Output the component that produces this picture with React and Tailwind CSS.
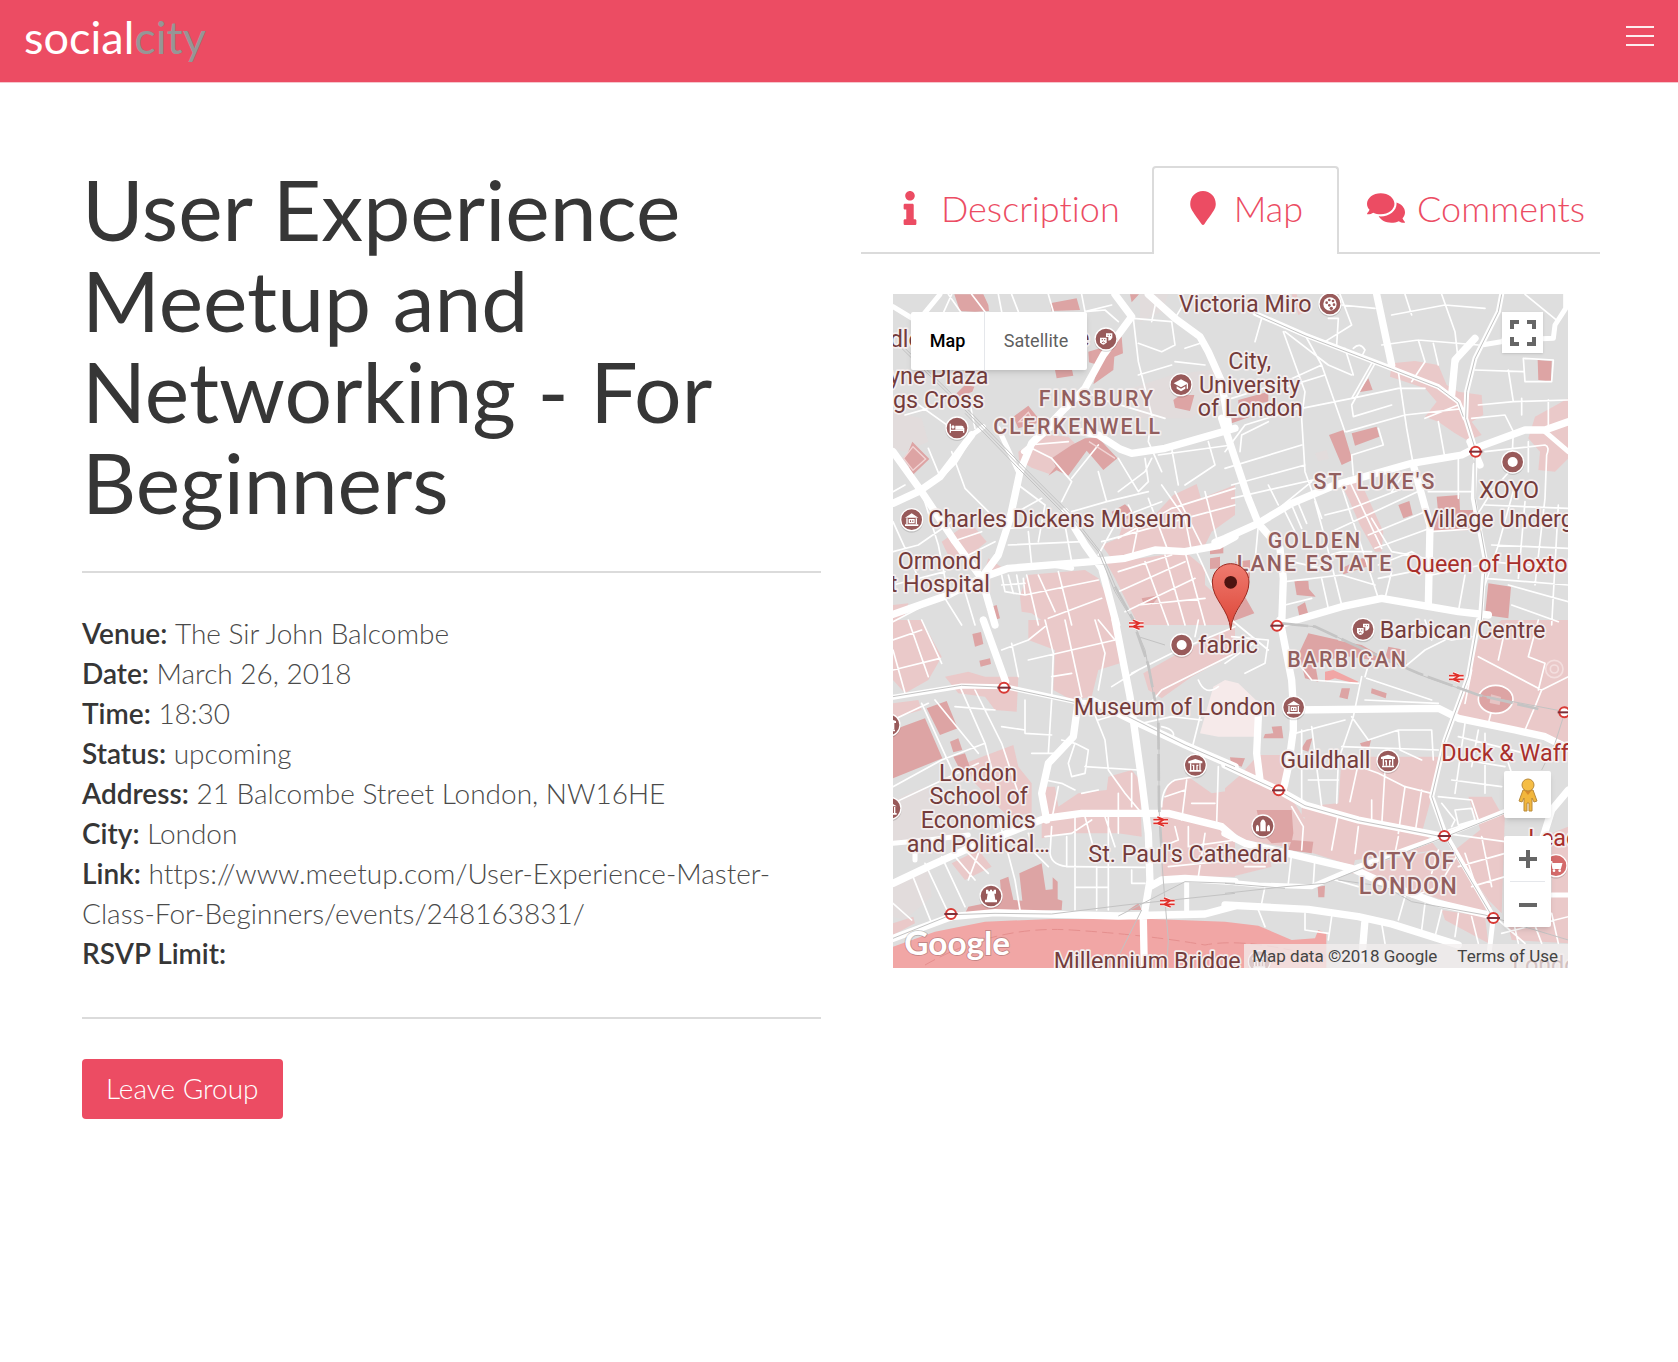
import React, { useState } from "react";
import { FaInfo, FaMapMarker, FaComments } from "react-icons/fa";

const details = [
  ["Venue", "The Sir John Balcombe"],
  ["Date", "March 26, 2018"],
  ["Time", "18:30"],
  ["Status", "upcoming"],
  ["Address", "21 Balcombe Street London, NW16HE"],
  ["City", "London"],
  ["Link", "https://www.meetup.com/User-Experience-Master-Class-For-Beginners/events/248163831/"],
  ["RSVP Limit", ""],
];

const tabs = [
  { id: "description", label: "Description", Icon: FaInfo },
  { id: "map", label: "Map", Icon: FaMapMarker },
  { id: "comments", label: "Comments", Icon: FaComments },
];

/* The street map is drawn from four tiles; each holds its own coordinates. */
const tiles = [
  {
    id: "nw",
    shift: "translate(0 0)",
    faint:
      "M24 380 L110 400 L130 470 L60 500 L24 490Z M765 28 L850 28 L830 80 L765 110Z M740 310 L860 270 L1010 250 L1020 330 L920 400 L760 400Z",
    pale:
      "M400 500 L430 480 L490 450 L550 455 L570 475 L500 520 L512 550 L495 568 L440 548 L402 525Z M170 770 L255 710 L305 770 L250 815 L200 832Z M310 820 L370 860 L290 885Z M405 935 L425 870 L600 855 L640 880 L665 935 L700 1020 L490 1020 L440 985 L410 980Z M650 780 L700 760 L720 700 L800 700 L865 630 L935 597 L948 640 L1050 600 L1050 690 L980 740 L960 780 L680 822Z M665 835 L900 800 L960 850 L960 900 L1050 980 L1050 1020 L760 1020 L690 880Z M24 960 L70 955 L60 990 L24 1015Z",
    dark:
      "M208 28 L295 28 L310 60 L312 78 L270 80 L225 78Z M495 55 L575 40 L585 75 L500 78Z M510 255 L560 250 L565 272 L515 280Z M215 325 L240 300 L268 305 L262 320 L225 335Z M670 155 L710 155 L714 205 L688 215 L685 255 L625 298 L640 240 L612 232 L610 200 L660 185Z M865 345 L885 330 L928 330 L915 378 L870 368Z M82 470 L133 522 L80 573 L72 545 L55 520 L68 505Z M385 395 L430 362 L460 400 L455 415 L400 430Z M680 680 L720 658 L745 680 L740 700 L690 705Z M735 28 L762 28 L740 52Z M975 795 L1015 785 L1015 805 L975 808Z M975 820 L1005 815 L1005 850 L975 852Z M305 970 L335 960 L345 1000 L318 1008Z M770 940 L825 930 L800 960 L775 955Z M500 520 L560 480 L600 460 L640 458 L697 520 L655 555 L625 520 L605 497 L550 572 L515 556 L490 572 L512 545Z",
    thin:
      "M190 28 L230 85 M260 28 L300 80 M340 28 L350 80 M380 28 L400 80 M490 28 L505 80 M590 28 L600 80 L660 75 L700 110 M600 80 L680 60 M745 100 L760 230 L800 390 L790 470 L830 560 M745 100 L860 110 L870 180 L830 200 L760 175 M815 40 L800 110 M870 100 L900 50 M900 190 L960 170 M60 390 L130 370 M130 490 L165 575 M200 500 L240 610 L330 700 M24 620 L60 600 M110 620 L160 780 L190 930 M24 710 L110 900 M24 800 L100 780 L230 690 M200 770 L290 740 M210 830 L330 770 M350 870 L360 920 L420 930 L415 880 M370 870 L385 925 M395 870 L405 925 M350 900 L420 895 M425 870 L460 1020 M460 870 L510 980 M520 860 L560 1020 M420 930 L640 885 M490 1000 L650 940 M440 490 L500 520 L560 590 L530 650 M560 580 L640 480 M640 560 L665 650 L560 680 M665 650 L790 620 M700 520 L760 620 L790 590 L780 520 M700 620 L780 560 L800 520 M430 480 L550 470 M380 690 L470 640 M400 600 L480 660 L460 770 M370 730 L540 720 M540 720 L560 830 M430 740 L440 840 M370 780 L590 770 M640 810 L700 700 L830 650 M700 760 L860 670 L1050 610 M650 770 L900 700 L1050 660 M730 660 L760 720 L740 820 M790 640 L850 800 M830 600 L900 700 L920 800 M870 620 L950 780 M960 620 L1000 780 M700 860 L860 810 M700 920 L900 830 M720 980 L930 880 M780 830 L850 1020 M840 810 L900 1020 M900 800 L960 1020 M930 790 L980 900 L1050 960 M760 960 L960 940 M24 900 L180 860 M180 940 L230 1020 M240 920 L270 1020 M24 1010 L120 960 M590 310 L640 340 L840 400 M860 240 L760 270 M870 230 L960 240 M970 470 L990 540 L900 600 M860 490 L880 600 M820 510 L1040 480 M60 330 L200 430 M200 28 L100 250 M270 430 L250 330",
    medium:
      "M24 65 L90 105 M165 28 L110 95 M165 575 L210 530 L260 450 L295 425 M415 500 L440 480 L530 400 M340 430 L400 560 M560 850 L500 840",
    wide:
      "M690 28 L740 95 L655 210 L600 310 L540 370 L440 475 L405 560 L375 700 L340 810 L290 878 L190 930 L24 988 M790 28 L870 100 L945 155 L970 200 L1010 290 L1030 420 M590 440 L640 450 L705 492 L740 505 L840 490 L1050 430 M24 500 L110 620 L210 770 L290 880 L330 1020 M24 655 L100 620 L165 575 L260 450 M540 680 L600 780 L650 850 L695 1020 M290 878 L370 850 L620 830 L720 820 L810 795 L900 800 L1000 782 L1050 755",
    rail: "M50 190 L250 385 L410 550 L550 690 L640 800 L690 920 L745 1010 M60 190 L260 385 L420 550 L560 690 L650 805 L700 925 M240 385 L400 550 L540 690",
  },
  {
    id: "ne",
    shift: "translate(1020 0)",
    faint: "M270 505 L305 495 L312 522 L280 528Z",
    pale:
      "M500 235 L570 228 L640 240 L665 300 L700 320 L770 330 L775 390 L740 410 L770 450 L745 460 L725 465 L690 445 L640 410 L600 395 L635 350 L600 310 L495 275Z M345 590 L400 575 L475 740 L470 800 L450 800 L405 720 L370 640Z M930 395 L1030 340 L1030 520 L990 560 L940 555 L945 500 L910 460Z M200 28 L220 90 L235 85 L215 28Z",
    dark:
      "M312 450 L355 435 L382 525 L350 540Z M380 445 L455 425 L463 455 L390 482Z M400 322 L430 280 L443 315Z M938 225 L980 228 L978 290 L940 285Z M635 635 L703 630 L705 675 L745 675 L740 735 L625 738 L640 690Z M520 660 L553 648 L563 690 L535 700Z M790 895 L858 905 L850 1000 L780 990Z M208 888 L250 888 L252 912 L272 935 L215 930Z M217 965 L240 952 L252 995 L225 1002Z M20 1010 L60 935 L88 985Z M350 850 L420 815 L425 845 L355 868Z M40 345 L130 320 L130 350 L40 365Z M20 400 L75 395 L20 415Z M30 830 L75 825 L75 880 L50 885Z",
    thin:
      "M110 100 L90 170 M345 28 L380 120 L300 170 M310 100 L340 100 L335 180 M175 140 L240 320 L230 400 L240 560 L290 700 M180 140 L310 240 L380 270 M240 150 L290 240 L360 440 M290 240 L180 290 L20 340 M300 270 L170 310 M360 190 L385 270 M385 190 Q405 170 420 195 L410 215 M350 60 L450 70 M440 235 L380 340 L230 370 M450 235 L380 360 L385 395 L500 360 M380 340 L520 310 L600 310 M500 90 L660 60 M540 28 L560 90 M470 180 L580 165 L760 180 M580 165 L600 230 L560 290 M625 175 L640 240 M650 28 L690 140 L700 230 M660 60 L780 70 M520 260 L545 430 L565 540 M460 430 L475 480 L380 510 L385 570 M365 440 L540 390 L720 370 M600 400 L700 360 M640 410 L660 520 M750 255 L895 260 M850 255 L865 350 L760 360 M895 220 L985 225 L980 290 L900 290Z M865 350 L1030 345 M890 340 L890 390 M970 345 L970 430 M900 28 L1000 110 M840 130 L830 170 M740 400 L840 390 L865 440 L862 500 M780 500 L960 480 Q975 485 965 510 L960 640 M910 470 L910 560 M870 540 L800 620 L750 700 M870 600 L820 780 L780 900 M780 660 L1030 670 M800 780 L1030 790 M790 830 L1030 850 M780 880 L1030 900 M900 650 L880 880 M960 640 L930 900 M1000 660 L980 1020 M850 900 L1030 950 M860 960 L1000 1010 M0 500 L60 420 L220 370 M45 500 L50 450 L130 410 M0 550 L230 480 M20 600 L240 540 M20 640 L330 570 M130 600 L160 660 M100 720 L260 590 M270 650 L300 760 L350 960 M180 680 L210 740 M200 660 L230 730 M220 655 L245 715 M345 590 L460 940 M370 580 L470 790 M300 690 L380 670 L560 600 M320 740 L600 610 M430 750 L600 680 M450 790 L615 730 M440 700 L500 800 L610 820 M460 840 L560 800 L610 830 M460 880 L610 850 M480 940 L500 860 M280 820 L350 800 L440 800 M200 830 L290 850 M180 890 L350 870 L450 900 M290 880 L310 970 M180 960 L260 940 M100 720 L90 830 M700 520 L700 640 M610 620 L740 620 M615 740 L770 730 M620 870 L770 840 M500 620 L540 560 M700 980 L720 870",
    medium:
      "M90 85 L240 150 L500 250 L640 305 L700 350 L720 400 M770 180 L860 165 L985 160 L990 120 L1022 70 L1022 28 M750 540 L745 640 L780 820 L765 1020 M830 28 L820 80 L750 220 L725 320 L722 400 L750 490 M960 440 L1030 500",
    wide:
      "M455 28 L500 240 M750 160 L690 225 L680 330 M-30 772 L0 760 L100 715 L200 655 L330 600 L560 535 L710 510 L750 490 L900 435 L960 435 L1030 410 M-10 400 L70 640 L100 715 L165 790 L175 880 L170 1020 M565 540 L615 720 L610 960 M170 1018 L350 965 L470 940 L700 980 L790 990 M735 470 L765 540",
    rail: "M90 85 L240 152 L500 252 L640 307 L700 352 L715 395 M830 28 L820 80 L750 220 L725 320 L722 400 L750 490 L750 640 L782 820 L768 1020",
  },
  {
    id: "sw",
    shift: "translate(0 1005)",
    faint:
      "M24 540 L120 500 L250 560 L250 660 L24 670Z M24 800 L130 740 L140 830 L60 900 L24 890Z M880 110 L1000 60 L1010 130 L900 165Z",
    pale:
      "M24 0 L110 0 L170 110 L130 180 L60 220 L24 180Z M180 170 L250 155 L300 170 L400 170 L395 275 L330 270 L300 230 L220 220Z M430 0 L690 0 L705 130 L640 150 L620 230 L560 240 L505 210 L510 90 L430 60Z M24 250 L100 240 L110 270 L24 295Z M775 160 L880 100 L1050 20 L1050 100 L920 170 L830 235 L790 210Z M240 430 L385 375 L400 440 L440 490 L440 580 L370 590 L310 530 L270 490Z M470 655 L470 500 L510 500 L520 560 L580 520 L665 510 L670 470 L740 450 L765 480 L770 650 L700 640 L560 640Z M830 560 L850 490 L910 470 L980 520 L1050 510 L1050 770 L830 770 L830 620Z M200 730 L280 690 L320 740 L240 780Z M24 910 L85 890 L90 910 L24 945Z",
    dark:
      "M24 330 L120 295 L172 415 L24 475Z M125 265 L185 243 L218 325 L165 345Z M195 365 L220 355 L232 390 L205 397Z M205 410 L240 400 L258 450 L225 450Z M262 42 L288 36 L295 72 L270 80Z M283 122 L315 115 L318 132 L287 140Z M403 760 L470 730 L482 810 L503 808 L503 772 L518 785 L518 838 L532 842 L530 870 L240 880 L250 860 L350 840 L345 780 L370 770 L385 840 L412 842Z M730 870 L760 850 L770 870Z",
    thin:
      "M24 60 L110 30 M70 0 L130 170 M24 150 L165 115 M24 90 L60 220 M110 0 L170 130 M225 200 L300 370 L340 520 M110 250 L210 470 M150 240 L280 400 M210 260 L330 270 M24 300 L130 250 M24 500 L170 420 L300 370 M24 550 L280 430 M270 210 L350 370 L400 520 M350 90 L430 60 L480 20 M380 70 L400 170 M480 0 L505 100 L500 230 M540 0 L590 230 M630 0 L660 100 L640 210 M430 120 L690 60 M500 170 L560 160 M420 240 L420 340 L500 345 M350 320 L420 330 M440 400 L520 400 M500 240 L490 400 M570 370 L610 390 L600 460 L560 470 L550 430Z M620 260 L660 360 L670 450 L720 520 L770 580 M600 440 L760 450 M530 360 L570 370 M640 300 L740 270 M680 200 L760 150 M740 160 L880 90 L1050 20 M770 280 L830 210 L930 160 L1050 100 M940 180 Q960 230 1000 200 M950 270 L920 390 M770 310 L860 290 L950 300 M830 320 Q880 330 860 360 M480 480 L530 490 L570 510 M520 500 L500 600 M590 520 L640 510 M700 520 L700 640 M740 460 L740 560 M500 620 L495 700 Q500 740 560 740 L780 742 M570 590 L570 870 M635 740 L635 870 M670 590 L670 870 M600 590 L630 700 M570 802 L670 802 M660 590 L690 680 M740 750 L740 790 L780 790 M545 650 L545 740 M480 650 L560 640 L620 600 M830 560 Q830 500 870 480 L930 470 M905 480 L890 600 M840 530 L900 510 M1000 440 L995 610 M920 550 L990 550 M870 620 L880 660 L830 680 M910 620 L910 680 L1050 660 M850 740 L1050 720 M960 640 L940 770 M120 730 L200 900 M170 710 L240 860 M80 760 L140 910 M210 710 L270 780 M240 690 L310 760 M24 850 L80 900 M340 590 L390 780 L405 870 M280 700 L250 780 M430 640 L450 700 L490 740 M640 0 L690 60 M940 0 L930 50",
    medium:
      "M24 232 L230 198 L360 200 L570 245 L640 250 M24 670 L130 660 L250 645 M905 780 L905 880 M90 680 L90 720",
    wide:
      "M295 0 L362 185 M690 0 L735 230 L770 480 L790 640 L795 790 M580 240 L565 350 L490 430 L470 520 L485 600 M24 790 L130 740 L240 690 L480 595 L590 580 L850 580 L1010 620 L1050 655 M24 955 L200 890 L330 878 L550 884 L700 888 L960 882 L1050 858 M795 780 L775 900 L778 1050 M795 800 L830 780 L900 775 L1050 785 M620 240 L740 300 L900 375 L1050 440",
    rail: "M24 230 L230 196 L360 202 L570 247 M700 275 L900 375 L1050 440 M755 30 L780 90 L818 290 L822 380 L822 560 L828 690 L838 820 L850 960 L845 1040 M760 50 L840 75 M24 955 L200 884 L330 880 L500 882 L720 855 L1050 820 M700 888 L900 785 L1050 790 M770 870 L705 1000",
  },
  {
    id: "se",
    shift: "translate(1020 1005)",
    faint: "",
    pale:
      "M40 470 L100 405 L180 405 L190 520 L240 600 L235 690 L60 660 L0 620 L0 505Z M350 410 L640 410 L620 530 L590 640 L230 590 L230 560 L340 550Z M760 60 L830 0 L1030 0 L1030 370 L860 330 L690 290 L740 140Z M240 560 L600 640 L640 690 L390 740 L235 690Z M380 760 L460 770 L760 880 L800 860 L700 700 L640 690 L390 720Z M690 690 L840 570 L830 880 L790 840Z M840 880 L1030 820 L1030 970 L860 960Z M20 710 L130 700 L140 740 L20 770Z M650 870 L780 890 L790 970 L660 900Z M730 530 L800 530 L840 600 L770 640Z M980 640 L1030 620 L1030 880 L980 880Z",
    dark:
      "M250 40 L340 60 L330 115 L270 130 L280 185 L240 175 L222 100Z M330 60 L410 75 L480 115 L490 80 L540 90 L545 135 L340 105Z M350 205 L375 205 L368 238 L343 232Z M440 205 L485 220 L482 235 L438 220Z M95 570 L200 570 L205 640 L200 665 L140 670 L110 640Z M200 660 L265 665 L260 700 L190 690Z M140 320 L170 318 L175 355 L115 355 L120 342 L145 340Z M245 360 L262 355 L250 395 L228 388Z M405 370 L438 360 L432 385 L410 380Z M15 412 L60 415 L50 440 L18 430Z M278 800 L300 797 L298 832 L280 832Z",
    thin:
      "M20 0 L130 90 M20 50 L130 60 L120 130 L60 160 M0 130 L100 60 M220 130 L260 180 L400 190 M410 170 L385 290 L340 420 L335 550 M425 175 L620 240 M420 240 L640 250 M420 170 L440 100 M540 140 L600 90 L660 60 M560 30 L680 60 L740 50 M600 0 L620 60 M760 110 L950 210 L930 260 M950 210 L1030 170 M840 30 L820 120 M940 0 L910 110 L960 130 L940 210 M740 150 L720 250 M800 270 L790 310 M930 260 L900 330 M230 330 L230 560 M260 320 L290 560 M210 340 L360 300 M250 480 L340 480 M350 380 L640 390 M380 290 L430 360 L520 330 L620 330 L625 420 M520 330 L525 390 L590 420 M400 430 L375 545 M350 420 L460 460 L540 500 L620 520 M480 450 L470 620 M540 500 L520 640 M440 540 L440 610 M590 510 L570 640 M340 580 L320 690 M200 560 L235 620 L230 690 M400 620 L390 700 M520 650 L510 700 M640 530 L740 540 L760 600 L670 630 M650 550 L690 600 L680 620 M690 570 L740 565 L750 600 L700 615Z M660 410 L840 440 M720 310 L690 520 M760 330 L740 440 M700 350 L900 400 M680 480 L830 500 M780 340 L780 520 M860 460 L840 400 M660 640 L840 665 M700 740 L840 700 M740 800 L840 770 M720 700 L760 820 M770 650 L800 800 M700 700 L640 800 L560 830 M640 690 L620 760 M270 710 L265 790 M200 700 L190 790 M60 740 L120 740 M120 800 L110 850 M330 780 L400 800 M540 830 L520 900 M600 850 L590 930 M650 870 L630 950 M700 880 L690 950 M740 890 L760 970 M820 900 L900 970 M830 940 L1030 890 M860 880 L880 970 M920 890 L950 970 M980 880 L1000 970 M100 870 L120 920 M240 880 L240 930 L310 940 M320 890 L310 960 M470 910 L480 970",
    medium:
      "M760 0 L730 170 L660 360 L620 530 L660 640 L805 890 L790 1020 M0 785 L100 795 L260 800 L400 740 L650 650 L850 570 M980 825 L1030 825",
    wide:
      "M165 0 L200 180 L205 260 L205 330 L190 440 L175 510 M205 270 L640 265 L700 295 L870 330 L960 350 L1030 385 M100 290 L95 400 L105 480 M0 640 L60 670 L380 745 L500 800 L640 850 L790 885 M0 855 L250 868 L400 890 L500 912 L700 975 M420 900 L410 1020 M1030 510 L980 570 L955 650 M0 435 L160 510 L240 555 L400 600 L650 648",
    rail: "M0 438 L160 512 L240 557 L400 602 L650 650 M160 10 L270 20 L420 90 L600 170 L760 225 L1020 275 L990 370 L950 450 M760 0 L730 170 L660 360 L620 530 L660 650 L805 895 M0 820 L180 800 L300 790 L400 750 L650 655 L850 575 M0 790 L180 805 M340 780 L480 800 L560 845 L780 885 L1030 960",
  },
];

const placeLabels = [
  { x: 882, y: 80, t: "Victoria Miro" },
  { x: 14, y: 186, t: "dle" },
  { x: 576, y: 184, t: "e" },
  { x: 12, y: 298, t: "yne Plaza" },
  { x: 24, y: 369, t: "gs Cross" },
  { x: 1094, y: 253, t: "City,", mid: true },
  { x: 1094, y: 324, t: "University", mid: true },
  { x: 1096, y: 394, t: "of London", mid: true },
  { x: 1783, y: 638, t: "XOYO" },
  { x: 1616, y: 727, t: "Village Underground" },
  { x: 130, y: 727, t: "Charles Dickens Museum" },
  { x: 38, y: 851, t: "Ormond" },
  { x: 14, y: 921, t: "t Hospital" },
  { x: 940, y: 1103, t: "fabric" },
  { x: 1484, y: 1058, t: "Barbican Centre" },
  { x: 566, y: 1290, t: "Museum of London" },
  { x: 1186, y: 1450, t: "Guildhall" },
  { x: 279, y: 1487, t: "London", mid: true },
  { x: 281, y: 1558, t: "School of", mid: true },
  { x: 280, y: 1629, t: "Economics", mid: true },
  { x: 280, y: 1700, t: "and Political…", mid: true },
  { x: 610, y: 1730, t: "St. Paul's Cathedral" },
  { x: 506, y: 2053, t: "Millennium Bridge" },
  { x: 1882, y: 2064, t: "London" },
];

const nightlifeLabels = [
  { x: 1563, y: 862, t: "Queen of Hoxton" },
  { x: 1669, y: 1427, t: "Duck & Waffle" },
  { x: 1930, y: 1682, t: "Leadenhall" },
];

const areaLabels = [
  { x: 636, y: 364, t: "FINSBURY" },
  { x: 578, y: 446, t: "CLERKENWELL" },
  { x: 1470, y: 612, t: "ST. LUKE'S" },
  { x: 1290, y: 790, t: "GOLDEN" },
  { x: 1290, y: 857, t: "LANE ESTATE" },
  { x: 1388, y: 1146, t: "BARBICAN" },
];

const districtLabels = [
  { x: 1572, y: 1752, t: "CITY OF" },
  { x: 1570, y: 1827, t: "LONDON" },
];

const glyphs = {
  theatre: (
    <>
      <path d="M-18 -4 h20 v14 q-10 14 -20 0Z" fill="white" />
      <path d="M0 -17 h19 v13 q-4 9 -12 9 v-11 h-7Z" fill="white" />
      <path d="M-13 2 h4 M-6 2 h4 M-12 11 q4 -4 8 0 M5 -11 h3 M12 -11 h3" stroke="#985a5a" strokeWidth="3" fill="none" />
    </>
  ),
  school: (
    <>
      <path d="M-22 -4 L0 -16 L22 -4 L0 8Z M-13 5 L0 12 L13 5 V12 L0 20 L-13 12Z" fill="white" />
      <path d="M19 -3 V12" stroke="white" strokeWidth="4" />
    </>
  ),
  bed: (
    <>
      <path d="M-20 -13 V14 M20 0 V14 M-20 7 H20" stroke="white" strokeWidth="4" fill="none" />
      <path d="M-5 -7 H14 q6 0 6 6 V5 H-5Z" fill="white" />
      <circle cx="-12" cy="-3" r="5" fill="white" />
    </>
  ),
  museum: (
    <>
      <path d="M-20 -6 L0 -19 L20 -6Z M-20 14 h40 v5 h-40Z" fill="white" />
      <path d="M-14 -4 V14 M14 -4 V14 M-7 0 H7 V9 H-7Z M0 0 V9" stroke="white" strokeWidth="4" fill="none" />
    </>
  ),
  hall: (
    <>
      <path d="M-21 -12 L0 -19 L21 -12 V-6 H-21Z M-18 14 h36 v5 h-36Z" fill="white" />
      <path d="M-14 -6 V14 M14 -6 V14 M-5 14 V0 H-9 M5 14 V0 H9" stroke="white" strokeWidth="4" fill="none" />
    </>
  ),
  palette: (
    <>
      <circle r="20" fill="white" />
      <g fill="#985a5a">
        <circle cx="-10" cy="-4" r="4" />
        <circle cx="-2" cy="-12" r="4" />
        <circle cx="9" cy="-9" r="4" />
        <circle cx="12" cy="2" r="4" />
        <circle cx="-2" cy="4" r="4" />
        <circle cx="4" cy="13" r="5" />
      </g>
    </>
  ),
  tower: <path d="M-15 -19 h7 v5 h5 v-5 h6 v5 h5 v-5 h7 v12 h-5 l3 18 h5 v8 h-36 v-8 h5 l3 -18 h-5Z" fill="white" />,
  church: (
    <path d="M-21 16 V4 q0 -6 4 -8 q5 2 5 8 V16Z M-8 16 V-10 q2 -8 8 -10 q6 2 8 10 V16Z M12 16 V4 q0 -6 5 -8 q4 2 4 8 V16Z" fill="white" />
  ),
  dot: <circle r="15" fill="white" />,
  cart: (
    <>
      <path d="M-20 -12 h7 l4 20 h22 l4 -14 h-28" stroke="white" strokeWidth="4" fill="white" />
      <circle cx="-6" cy="15" r="4" fill="white" />
      <circle cx="11" cy="15" r="4" fill="white" />
    </>
  ),
};

const places = [
  { x: 663, y: 162, g: "theatre" },
  { x: 888, y: 299, g: "school" },
  { x: 216, y: 429, g: "bed" },
  { x: 80, y: 704, g: "museum" },
  { x: 1335, y: 57, g: "palette" },
  { x: 1883, y: 531, g: "dot" },
  { x: 1434, y: 1033, g: "theatre" },
  { x: 1226, y: 1267, g: "museum" },
  { x: 1509, y: 1428, g: "hall" },
  { x: 890, y: 1080, g: "dot" },
  { x: 931, y: 1441, g: "hall" },
  { x: 318, y: 1833, g: "tower" },
  { x: 1134, y: 1623, g: "church" },
  { x: 12, y: 1320, g: "hall" },
  { x: 15, y: 1570, g: "museum" },
  { x: 2013, y: 1742, g: "cart", c: "#d46a6a" },
  { x: 1123, y: 2030, g: "hall" },
];

const tubeStops = [
  [1772, 500], [1176, 1022], [357, 1208], [1181, 1516], [1678, 1653], [1825, 1899], [198, 1887], [2038, 1282],
];

const railStops = [[754, 1019], [827, 1609], [847, 1852], [1714, 1177]];

function StreetMap() {
  const layer = (key, props) =>
    tiles.map((tile) => <path key={key + tile.id} d={tile[key]} transform={tile.shift} {...props} />);
  const road = { fill: "none", stroke: "white", strokeLinecap: "round", strokeLinejoin: "round" };
  return (
    <svg
      viewBox="24 27 2025 2022"
      preserveAspectRatio="xMidYMid slice"
      className="block h-full w-full"
      role="img"
      aria-label="Map of central London"
    >
      <defs>
        <linearGradient id="pin" x1="0" y1="0" x2="0" y2="1">
          <stop offset="0" stopColor="#ef7b6f" />
          <stop offset="1" stopColor="#dc4436" />
        </linearGradient>
      </defs>
      <rect x="24" y="27" width="2025" height="2022" fill="#dedede" />
      {layer("faint", { fill: "#e2dcdc" })}
      {layer("pale", { fill: "#eac9c9" })}
      {layer("dark", { fill: "#dda4a4" })}
      <path d="M945 1345 L985 1205 L1020 1185 L1060 1195 L1118 1250 L1112 1355 L1000 1355Z" fill="#f6eaea" />
      <path d="M1320 1160 L1345 1155 L1420 1190 L1415 1197 L1350 1180 L1320 1190Z" fill="#f1a6a5" />
      <path
        d="M24 1985 L150 1940 L300 1910 L500 1902 L800 1902 L1020 1910 L1120 1922 L1220 1965 L1290 1960 L1300 1935 L1324 1945 L1324 2060 L24 2060Z"
        fill="#f1a6a5"
      />
      <path d="M120 2040 Q330 1920 560 1935 T960 1980 Q1060 1960 1240 2000" fill="none" stroke="#e58f8e" strokeWidth="3" strokeDasharray="34 16" />
      {layer("thin", { ...road, strokeWidth: 5 })}
      {layer("medium", { ...road, strokeWidth: 15 })}
      {layer("wide", { ...road, strokeWidth: 22 })}
      <ellipse cx="1832" cy="1243" rx="52" ry="42" fill="#dda4a4" stroke="white" strokeWidth="5" />
      <path d="M1818 1228 l30 8 l-4 24 l-30 -6Z" fill="#e6c4c4" />
      <circle cx="2008" cy="1152" r="26" fill="none" stroke="#f3dede" strokeWidth="5" />
      <circle cx="2008" cy="1152" r="12" fill="none" stroke="#f3dede" strokeWidth="5" />
      <path d="M56 520 L84 485 L122 522 L84 556Z M402 410 L430 382 L446 408Z M612 470 L690 520" fill="none" stroke="#f1d5d5" strokeWidth="4" />
      {layer("rail", { fill: "none", stroke: "#c3c3c3", strokeWidth: 3 })}
      <path
        d="M690 905 L745 1005 M755 1040 L790 1140 L820 1300 L822 1560 L830 1700 M1190 1015 L1290 1025 L1440 1095 L1600 1165 L1780 1230 L1960 1272"
        fill="none"
        stroke="#c4c4c4"
        strokeWidth="8"
        strokeDasharray="80 14"
      />

      {railStops.map(([x, y]) => (
        <g key={"r" + x} transform={`translate(${x} ${y})`} fill="none">
          <path d="M-22 -5 H22 M-22 6 H22 M-10 -13 L10 -5 L-10 6 L10 14" stroke="white" strokeWidth="9" />
          <path d="M-22 -5 H22 M-22 6 H22 M-10 -13 L10 -5 L-10 6 L10 14" stroke="#e0302b" strokeWidth="5" />
        </g>
      ))}
      {tubeStops.map(([x, y]) => (
        <g key={"t" + x} transform={`translate(${x} ${y})`}>
          <circle r="15" fill="white" stroke="#d83a35" strokeWidth="6" />
          <path d="M-20 0 H20" stroke="#7d2f38" strokeWidth="6" />
        </g>
      ))}
      {places.map((p) => (
        <g key={"p" + p.x + p.y} transform={`translate(${p.x} ${p.y})`}>
          <circle cy="4" r="35" fill="#00000022" />
          <circle r="33" fill={p.c || "#985a5a"} stroke="white" strokeWidth="4" />
          {glyphs[p.g]}
        </g>
      ))}

      <g
        fontFamily="Roboto, sans-serif"
        fontWeight="400"
        stroke="#f4eeee"
        strokeWidth="10"
        strokeLinejoin="round"
        style={{ paintOrder: "stroke" }}
      >
        <g fontSize="70" fill="#743c3c">
          {placeLabels.map((l) => (
            <text key={l.t + l.y} x={l.x} y={l.y} textAnchor={l.mid ? "middle" : "start"}>{l.t}</text>
          ))}
        </g>
        <g fontSize="70" fill="#a82f2b">
          {nightlifeLabels.map((l) => (
            <text key={l.t} x={l.x} y={l.y}>{l.t}</text>
          ))}
        </g>
        <g fontWeight="500" fill="#925f5f" textAnchor="middle">
          <g fontSize="64" className="tracking-widest">
            {areaLabels.map((l) => (
              <text key={l.t} x={l.x} y={l.y}>{l.t}</text>
            ))}
          </g>
          <g fontSize="70" className="tracking-wider">
            {districtLabels.map((l) => (
              <text key={l.t} x={l.x} y={l.y}>{l.t}</text>
            ))}
          </g>
        </g>
      </g>

      <path
        d="M1037 1035 C1032 970 982 945 982 891 A55 55 0 0 1 1092 891 C1092 945 1042 970 1037 1035Z"
        fill="url(#pin)"
        stroke="#9c2a20"
        strokeWidth="3"
      />
      <circle cx="1037" cy="892" r="19" fill="#4d1410" />
      <text
        x="58"
        y="2009"
        fontSize="100"
        fontWeight="700"
        fontFamily="Lato, sans-serif"
        fill="white"
        stroke="#00000030"
        strokeWidth="6"
        style={{ paintOrder: "stroke" }}
      >
        Google
      </text>
    </svg>
  );
}

function MapPanel() {
  return (
    <div className="relative aspect-[675/674] w-full overflow-hidden font-[Roboto,sans-serif] font-normal">
      <StreetMap />
      <div className="absolute left-[18px] top-[18px] flex h-[58px] rounded-xs bg-white text-lg shadow-md">
        <button type="button" className="w-[74px] border-r border-gray-200 font-medium text-black">Map</button>
        <button type="button" className="w-[102px] text-[#5f5f5f]">Satellite</button>
      </div>
      <button
        type="button"
        aria-label="Toggle full screen"
        className="absolute right-[25px] top-[18px] flex size-[41px] items-center justify-center bg-white shadow-sm"
      >
        <svg viewBox="0 0 26 26" className="size-[26px]" fill="none" stroke="#666" strokeWidth="4">
          <path d="M2 9V2H9 M17 2H24V9 M24 17V24H17 M9 24H2V17" />
        </svg>
      </button>
      <div className="absolute bottom-[41px] right-[17px] flex w-[47px] flex-col gap-[18px]">
        <button type="button" aria-label="Street View" className="flex h-[47px] items-center justify-center rounded-xs bg-white shadow-md">
          <svg viewBox="0 0 20 34" className="h-[34px] w-5" stroke="#b98a3a" strokeWidth="1">
            <path d="M5 12 H15 L19 23 L16 24 L14 20 V33 H11 V25 H9 V33 H6 V20 L4 24 L1 23Z" fill="#f2b63c" />
            <path d="M6 12 L10 17 L14 12Z" fill="#d98b2b" stroke="none" />
            <circle cx="10" cy="7" r="6" fill="#f5bd45" />
          </svg>
        </button>
        <div className="flex flex-col rounded-xs bg-white shadow-md">
          <button type="button" aria-label="Zoom in" className="flex h-[45px] items-center justify-center">
            <svg viewBox="0 0 18 18" className="size-[18px]" stroke="#666" strokeWidth="4">
              <path d="M0 9H18M9 0V18" />
            </svg>
          </button>
          <div className="mx-1.5 h-px bg-gray-200" />
          <button type="button" aria-label="Zoom out" className="flex h-[45px] items-center justify-center">
            <svg viewBox="0 0 18 18" className="size-[18px]" stroke="#666" strokeWidth="4">
              <path d="M0 9H18" />
            </svg>
          </button>
        </div>
      </div>
      <div className="absolute bottom-0 right-0 flex h-6 items-center gap-5 bg-[#f2eded]/75 pl-2 pr-2.5 text-[17px] leading-6 text-[#444]">
        <span>Map data ©2018 Google</span>
        <a href="#terms">Terms of Use</a>
      </div>
    </div>
  );
}

export default function App() {
  const [active, setActive] = useState("map");
  return (
    <div className="min-h-screen bg-white font-[Lato,sans-serif] font-light text-[#363636] [font-variant-ligatures:none]">
      <header className="flex h-[83px] items-start justify-between border-b border-[#f6c6cd] bg-[#ec4c63] px-6">
        <a href="#home" className="pt-2 text-[45px] font-normal leading-[58px] text-white">
          social<span className="text-[#969696]">city</span>
        </a>
        <button type="button" aria-label="Open menu" className="mt-[26px] flex w-7 flex-col gap-[7px]">
          <span className="h-0.5 w-full bg-white/90" />
          <span className="h-0.5 w-full bg-white/90" />
          <span className="h-0.5 w-full bg-white/90" />
        </button>
      </header>

      <main className="grid grid-cols-2 gap-10 pb-20 pl-[82px] pr-[78px] pt-20">
        <section>
          <h1 className="text-[84px] font-normal leading-[91px]">
            User Experience Meetup and Networking - For Beginners
          </h1>
          <hr className="mt-11 border-t-2 border-[#dbdbdb]" />
          <dl className="mt-10 text-[28px] leading-[40px] text-[#4a4a4a]">
            {details.map(([term, value]) => (
              <div key={term}>
                <dt className="inline font-semibold text-[#363636]">{term}:</dt>{" "}
                <dd className="inline">
                  {term === "Link" ? <a href={value}>{value}</a> : value}
                </dd>
              </div>
            ))}
          </dl>
          <hr className="mt-11 border-t-2 border-[#dbdbdb]" />
          <button type="button" className="mt-10 h-[60px] rounded bg-[#ec4c63] px-6 pb-0.5 text-[28px] text-white">
            Leave Group
          </button>
        </section>

        <section className="pt-[3px]">
          <div role="tablist" className="flex h-[88px] border-b-2 border-[#dbdbdb] text-[36px] text-[#ec4c63]">
            {tabs.map(({ id, label, Icon }) => (
              <button
                key={id}
                type="button"
                role="tab"
                aria-selected={active === id}
                onClick={() => setActive(id)}
                className={
                  active === id
                    ? "-mb-0.5 flex items-center gap-3 rounded-t border-2 border-b-0 border-[#dbdbdb] bg-white pb-1.5 pl-[30px] pr-[34px]"
                    : "flex items-center gap-3 pb-0.5 pl-[30px] pr-8 last:pl-7 last:pr-0"
                }
              >
                <Icon className="h-[34px] w-[38px]" />
                {label}
              </button>
            ))}
          </div>
          <div className="px-8 pt-10">
            <MapPanel />
          </div>
        </section>
      </main>
    </div>
  );
}
